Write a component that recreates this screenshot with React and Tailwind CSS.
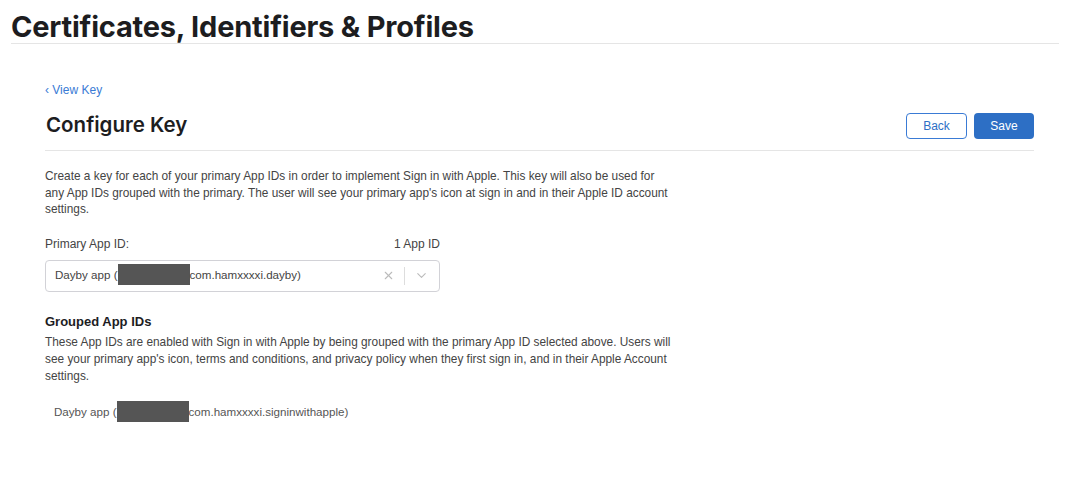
import { X, ChevronDown } from 'lucide-react';

function Redacted() {
  return <span className="inline-block w-[72px] h-[21px] bg-[#555555] align-middle -mt-[2px]" />;
}

export default function App() {
  return (
    <div className="w-[1080px] h-[497px] bg-white font-['Liberation_Sans',Arial,sans-serif] text-[#333]">
      <header className="px-[11px] pt-[10px]">
        <h1 className="font-['Inter',sans-serif] font-bold text-[29px] leading-[33px] text-[#1d1d1f] tracking-[-0.2px]">
          Certificates, Identifiers &amp; Profiles
        </h1>
        <div className="mr-[10px] border-b border-[#e5e5e5]" />
      </header>

      <main className="px-[45px] w-[1080px]">
        <div className="mt-[39px] text-[12px] leading-[14px] text-[#3a7bd5]">‹ View Key</div>

        <div className="mt-[16px] flex items-center justify-between w-[989px] pb-[11px] border-b border-[#e5e5e5]">
          <h2 className="font-['Inter',sans-serif] font-semibold text-[20.5px] leading-[26px] text-[#1d1d1f] ml-[1px] -mt-[3px]">
            Configure Key
          </h2>
          <div className="flex gap-[7px]">
            <button className="w-[61px] h-[26px] rounded-[4px] border border-[#3a7bd5] text-[12px] text-[#2d6fc5] bg-white">
              Back
            </button>
            <button className="w-[60px] h-[26px] rounded-[4px] bg-[#2d6fc5] text-[12px] text-white">
              Save
            </button>
          </div>
        </div>

        <p className="mt-[17px] w-[680px] text-[11.85px] leading-[16.5px] text-[#444]">
          Create a key for each of your primary App IDs in order to implement Sign in with Apple. This key will also be used for
          <br />
          any App IDs grouped with the primary. The user will see your primary app's icon at sign in and in their Apple ID account
          <br />
          settings.
        </p>

        <div className="mt-[19px] w-[395px]">
          <div className="flex justify-between text-[12px] leading-[15px] text-[#444]">
            <span>Primary App ID:</span>
            <span>1 App ID</span>
          </div>
          <div className="mt-[8px] h-[32px] flex items-center border border-[#d2d2d7] rounded-[4px] pl-[9px] pr-[10px] text-[11.6px] text-[#444]">
            <span className="flex-1">
              Dayby app (<Redacted />com.hamxxxxi.dayby)
            </span>
            <X className="w-[13px] h-[13px] text-[#bbb]" strokeWidth={2} />
            <span className="mx-[9px] w-px h-[18px] bg-[#ddd]" />
            <ChevronDown className="w-[15px] h-[15px] text-[#bbb]" strokeWidth={1.75} />
          </div>
        </div>

        <h3 className="mt-[22px] text-[13px] leading-[16px] font-bold text-[#1d1d1f]">Grouped App IDs</h3>
        <p className="mt-[4.5px] w-[680px] text-[11.85px] leading-[17px] text-[#444]">
          These App IDs are enabled with Sign in with Apple by being grouped with the primary App ID selected above. Users will
          <br />
          see your primary app's icon, terms and conditions, and privacy policy when they first sign in, and in their Apple Account
          <br />
          settings.
        </p>

        <div className="mt-[17.5px] ml-[9px] text-[11.6px] leading-[18px] text-[#555]">
          Dayby app (<Redacted />com.hamxxxxi.signinwithapple)
        </div>
      </main>
    </div>
  );
}
